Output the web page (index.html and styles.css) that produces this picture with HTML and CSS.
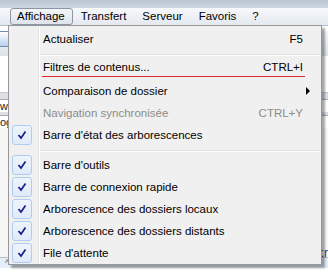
FILE: index.html
```html
<!DOCTYPE html>
<html lang="fr">

<head>
    <meta charset="UTF-8">
    <title>Affichage</title>
    <link rel="stylesheet" href="styles.css">
</head>

<body>
    <div class="frame-top"></div>
    <div class="menubar">
        <span class="menubar-item open">Affichage</span>
        <span class="menubar-item">Transfert</span>
        <span class="menubar-item">Serveur</span>
        <span class="menubar-item">Favoris</span>
        <span class="menubar-item">?</span>
    </div>

    <div class="workspace">
        <div class="toolbar">
            <span class="tool-icon"></span>
        </div>
        <div class="pane">
            <div class="pane-white"></div>
            <div class="pane-bar"></div>
            <div class="pane-row">wo</div>
            <div class="pane-bar thin"></div>
            <div class="pane-row">og</div>
            <div class="pane-rest"></div>
            <div class="pane-status">
                <span class="sort-arrow">^</span>
                <span class="status-text">:r</span>
            </div>
        </div>
    </div>

    <div class="dropdown">
        <div class="menu-row">
            <span class="gutter"></span>
            <span class="label">Actualiser</span>
            <span class="shortcut">F5</span>
        </div>
        <div class="menu-sep"></div>
        <div class="menu-row">
            <span class="gutter"></span>
            <span class="item-body marked">
                <span class="label">Filtres de contenus...</span>
                <span class="shortcut">CTRL+I</span>
            </span>
        </div>
        <div class="menu-row">
            <span class="gutter"></span>
            <span class="label">Comparaison de dossier</span>
            <span class="submenu-arrow"></span>
        </div>
        <div class="menu-row disabled">
            <span class="gutter"></span>
            <span class="label">Navigation synchronisée</span>
            <span class="shortcut">CTRL+Y</span>
        </div>
        <div class="menu-row">
            <span class="gutter"><span class="check"><svg width="10" height="10" viewBox="0 0 10 10"><path d="M1.5 5 L4 8 L8.5 1.5" /></svg></span></span>
            <span class="label">Barre d'état des arborescences</span>
        </div>
        <div class="menu-sep"></div>
        <div class="menu-row">
            <span class="gutter"><span class="check"><svg width="10" height="10" viewBox="0 0 10 10"><path d="M1.5 5 L4 8 L8.5 1.5" /></svg></span></span>
            <span class="label">Barre d'outils</span>
        </div>
        <div class="menu-row">
            <span class="gutter"><span class="check"><svg width="10" height="10" viewBox="0 0 10 10"><path d="M1.5 5 L4 8 L8.5 1.5" /></svg></span></span>
            <span class="label">Barre de connexion rapide</span>
        </div>
        <div class="menu-row">
            <span class="gutter"><span class="check"><svg width="10" height="10" viewBox="0 0 10 10"><path d="M1.5 5 L4 8 L8.5 1.5" /></svg></span></span>
            <span class="label">Arborescence des dossiers locaux</span>
        </div>
        <div class="menu-row">
            <span class="gutter"><span class="check"><svg width="10" height="10" viewBox="0 0 10 10"><path d="M1.5 5 L4 8 L8.5 1.5" /></svg></span></span>
            <span class="label">Arborescence des dossiers distants</span>
        </div>
        <div class="menu-row">
            <span class="gutter"><span class="check"><svg width="10" height="10" viewBox="0 0 10 10"><path d="M1.5 5 L4 8 L8.5 1.5" /></svg></span></span>
            <span class="label">File d'attente</span>
        </div>
    </div>
</body>

</html>
```

FILE: styles.css
```css
body {
    margin: 0;
    width: 328px;
    height: 279px;
    overflow: hidden;
    position: relative;
    font-family: "Liberation Sans", Arial, sans-serif;
    font-size: 11.5px;
    color: #000;
    background: #fff;
}

.frame-top {
    height: 8px;
    background: linear-gradient(#b9c4d2, #cdd6e1);
}

.menubar {
    display: flex;
    align-items: center;
    height: 17px;
    padding-left: 10px;
    background: linear-gradient(#f6f8fb, #e4e9f0);
    border-bottom: 1px solid #b6bcc6;
}

.menubar-item {
    padding: 0 6px;
    margin-right: 2px;
    line-height: 15px;
    border: 1px solid transparent;
    border-radius: 3px;
}

.menubar-item.open {
    border-color: #8d97a3;
    background: linear-gradient(#f3f5f8, #dfe4ea);
    padding-right: 7px;
    margin-right: 1px;
}

.workspace {
    height: 253px;
}

.toolbar {
    height: 25px;
    background: linear-gradient(#f4f6f9, #dde3ea);
}

.tool-icon {
    display: block;
    width: 12px;
    height: 14px;
    margin: 5px 0 0 -4px;
    border: 1px solid #6f8fb8;
    border-radius: 2px;
    background: linear-gradient(#ffffff, #b9d0ec);
}

.pane {
    border-left: 1px solid #9aa4b0;
    margin-left: -1px;
}

.pane-white {
    height: 36px;
    background: #fff;
    border-bottom: 1px solid #c8ccd2;
}

.pane-bar {
    height: 6px;
    background: #dcdfe3;
    border-bottom: 1px solid #a8adb4;
}

.pane-bar.thin {
    height: 3px;
}

.pane-row {
    height: 12px;
    line-height: 12px;
    font-size: 11px;
    color: #222;
    background: #fff;
}

.pane-rest {
    height: 129px;
    background: #f7f7f7;
    border-bottom: 1px solid #b8bdc4;
}

.pane-status {
    height: 10px;
    background: #e4effb;
    position: relative;
    font-size: 9px;
}

.sort-arrow {
    position: absolute;
    left: 5px;
    top: 0;
    color: #555;
}

.status-text {
    position: absolute;
    right: 0;
    top: -12px;
    font-size: 12px;
    color: #1b3d8c;
}

.dropdown {
    position: absolute;
    left: 8px;
    top: 25px;
    width: 312px;
    padding-top: 2px;
    border: 1px solid #979797;
    background: #f0f0f0;
    box-shadow: 3px 3px 2px rgba(0, 0, 0, 0.35);
}

.dropdown::before {
    content: "";
    position: absolute;
    left: 29px;
    top: 0;
    bottom: 0;
    width: 1px;
    background: #e2e3e3;
    border-right: 1px solid #fff;
}

.menu-row {
    display: flex;
    align-items: center;
    height: 22px;
    padding-right: 18px;
}

.gutter {
    width: 34px;
    flex-shrink: 0;
    align-self: stretch;
    display: flex;
    align-items: flex-start;
    padding-left: 3px;
    box-sizing: border-box;
}

.check {
    display: flex;
    align-items: center;
    justify-content: center;
    width: 18px;
    height: 18px;
    margin-top: 1px;
    border: 1px solid #aeccf0;
    border-radius: 3px;
    background: linear-gradient(#eef4fc, #e0ebf9);
    position: relative;
    z-index: 1;
}

.check svg path {
    fill: none;
    stroke: #14208c;
    stroke-width: 1.7;
}

.label {
    flex: 1;
    white-space: nowrap;
}

.shortcut {
    white-space: nowrap;
}

.item-body {
    flex: 1;
    display: flex;
    align-self: stretch;
    align-items: center;
}

.item-body.marked {
    border-bottom: 1px solid #d92b2b;
    margin-bottom: 3px;
    margin-right: -2px;
    padding-right: 2px;
    margin-left: -1px;
    padding-left: 1px;
}

.submenu-arrow {
    width: 0;
    height: 0;
    margin-right: -7px;
    border-top: 4px solid transparent;
    border-bottom: 4px solid transparent;
    border-left: 4px solid #000;
}

.menu-row.disabled {
    color: #8c8c8c;
}

.menu-sep {
    height: 0;
    margin: 4px 0 2px 31px;
    border-top: 1px solid #e0e0e0;
    border-bottom: 1px solid #fff;
}
```
